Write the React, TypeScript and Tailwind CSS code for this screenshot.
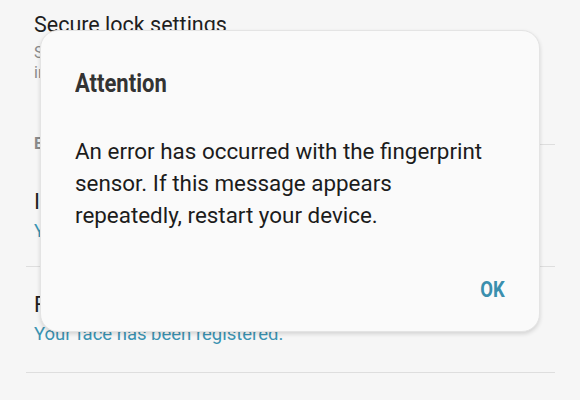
import React from 'react';

const SettingsList: React.FC = () => (
  <div className="flex flex-col">
    <div className="mt-[12px] pl-[34px] text-[21.5px] leading-[26px] text-[#1e1e1e]">Secure lock settings</div>
    <div className="mt-[5px] pl-[34px] text-[16px] leading-[20px] text-[#8a8a8a]">
      <div className="whitespace-nowrap">Set secure lock functions, such as Auto lock and Lock</div>
      <div className="whitespace-nowrap">instantly with Side key.</div>
    </div>

    <div className="mt-[51px] flex items-center pl-[34px] pr-[25px]">
      <span className="text-[16px] leading-[20px] font-bold text-[#8a8a8a]">E</span>
      <div className="ml-3 h-px flex-1 bg-[#dedede]" />
    </div>

    <div className="mt-[35px] pl-[34px] text-[22px] leading-[26px] text-[#1e1e1e]">Iris Scanner</div>
    <div className="mt-[5px] pl-[34px] text-[18px] leading-[22px] text-[#3b93b2]">Your irises have been registered.</div>
    <div className="mt-[24px] ml-[26px] h-px w-[529px] bg-[#dedede]" />

    <div className="mt-[25px] pl-[34px] text-[22px] leading-[26px] text-[#1e1e1e]">Face Recognition</div>
    <div className="mt-[5px] pl-[34px] text-[18.5px] leading-[22px] text-[#3b93b2]">Your face has been registered.</div>
    <div className="mt-[27px] ml-[26px] h-px w-[529px] bg-[#dedede]" />
  </div>
);

const AttentionDialog: React.FC = () => (
  <div className="absolute left-[40px] top-[30px] flex h-[302px] w-[500px] flex-col rounded-[18px] border border-[#e4e4e4] bg-[#fafafa] px-[34px] pt-[39px] shadow-[0_2px_4px_rgba(0,0,0,0.14)]">
    <h2 className="origin-left scale-x-[0.88] text-[25px] font-bold leading-[28px] text-[#333333]">Attention</h2>
    <p className="mt-[37px] whitespace-nowrap text-[22.4px] leading-[32px] text-[#1c1c1c]">
      An error has occurred with the fingerprint
      <br />
      sensor. If this message appears
      <br />
      repeatedly, restart your device.
    </p>
    <div className="mt-[45px] flex justify-end">
      <button className="origin-right scale-x-[0.82] text-[22.5px] font-bold leading-[26px] text-[#3a8fae]">OK</button>
    </div>
  </div>
);

export default function App() {
  return (
    <div className="relative h-[400px] w-[580px] overflow-hidden bg-[#f6f6f6] font-['Roboto',sans-serif]">
      <SettingsList />
      <AttentionDialog />
    </div>
  );
}
